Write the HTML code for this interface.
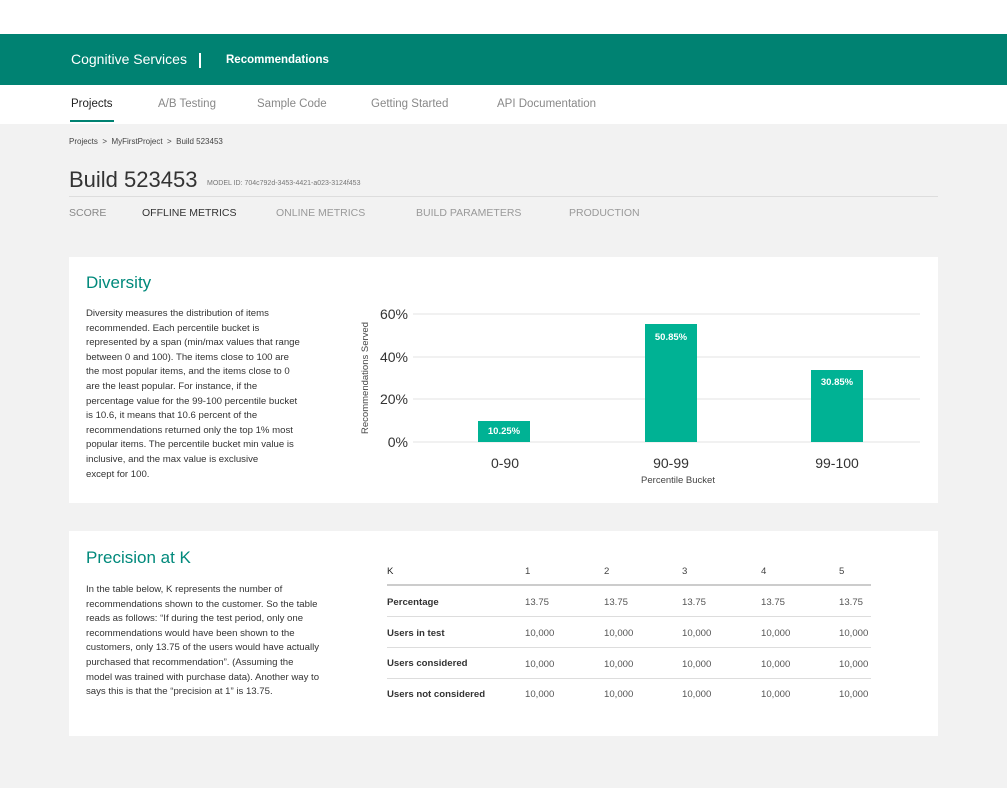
<!DOCTYPE html>
<html><head><meta charset="utf-8"><style>
*{margin:0;padding:0;box-sizing:border-box}
body{width:1007px;height:788px;background:#f2f2f2;font-family:"Liberation Sans",sans-serif;position:relative;overflow:hidden;color:#222}
.a{position:absolute;white-space:nowrap}
</style></head><body>
<div class="a" style="left:0;top:0;width:1007px;height:34px;background:#fff"></div>
<div class="a" style="left:0;top:34px;width:1007px;height:51px;background:#008272"></div>
<div class="a" style="left:71px;top:51px;color:#fff;font-size:14px">Cognitive Services</div>
<div class="a" style="left:199px;top:53px;width:2px;height:15px;background:#fff"></div>
<div class="a" style="left:226px;top:54px;color:#fff;font-size:11.5px;font-weight:bold">Recommendations</div>
<div class="a" style="left:0;top:85px;width:1007px;height:39px;background:#fff"></div>
<div class="a" style="left:71px;top:98px;font-size:11.5px;color:#222">Projects</div>
<div class="a" style="left:70px;top:120px;width:44px;height:2px;background:#008272"></div>
<div class="a" style="left:158px;top:98px;font-size:11.5px;color:#888">A/B Testing</div>
<div class="a" style="left:257px;top:98px;font-size:11.5px;color:#888">Sample Code</div>
<div class="a" style="left:371px;top:98px;font-size:11.5px;color:#888">Getting Started</div>
<div class="a" style="left:497px;top:98px;font-size:11.5px;color:#888">API Documentation</div>
<div class="a" style="left:69px;top:137px;font-size:8px;color:#444">Projects &nbsp;&gt;&nbsp; MyFirstProject &nbsp;&gt;&nbsp; Build 523453</div>
<div class="a" style="left:69px;top:167px;font-size:22px;color:#333;font-weight:300">Build 523453</div>
<div class="a" style="left:207px;top:180px;font-size:7px;color:#777">MODEL ID: 704c792d-3453-4421-a023-3124f453</div>
<div class="a" style="left:69px;top:196px;width:869px;height:1px;background:#ddd"></div>
<div class="a" style="left:69px;top:207px;font-size:10.5px;color:#888">SCORE</div>
<div class="a" style="left:142px;top:207px;font-size:10.5px;color:#333">OFFLINE METRICS</div>
<div class="a" style="left:276px;top:207px;font-size:10.5px;color:#999">ONLINE METRICS</div>
<div class="a" style="left:416px;top:207px;font-size:10.5px;color:#999">BUILD PARAMETERS</div>
<div class="a" style="left:569px;top:207px;font-size:10.5px;color:#999">PRODUCTION</div>

<div class="a" style="left:69px;top:257px;width:869px;height:246px;background:#fff"></div>
<div class="a" style="left:86px;top:273px;font-size:17px;color:#00897b">Diversity</div>
<div class="a" style="left:86px;top:307px;font-size:9.6px;line-height:14.6px;color:#333">Diversity measures the distribution of items<br>recommended. Each percentile bucket is<br>represented by a span (min/max values that range<br>between 0 and 100). The items close to 100 are<br>the most popular items, and the items close to 0<br>are the least popular. For instance, if the<br>percentage value for the 99-100 percentile bucket<br>is 10.6, it means that 10.6 percent of the<br>recommendations returned only the top 1% most<br>popular items. The percentile bucket min value is<br>inclusive, and the max value is exclusive<br>except for 100.</div>
<svg class="a" style="left:350px;top:290px" width="580" height="200" font-family="Liberation Sans, sans-serif">
<g stroke="#e3e3e3" stroke-width="1"><line x1="63" y1="24" x2="570" y2="24"/><line x1="63" y1="67" x2="570" y2="67"/><line x1="63" y1="109" x2="570" y2="109"/><line x1="63" y1="152" x2="570" y2="152"/></g>
<g font-size="14" fill="#333" text-anchor="end"><text x="58" y="29">60%</text><text x="58" y="72">40%</text><text x="58" y="114">20%</text><text x="58" y="157">0%</text></g>
<text transform="translate(18,88) rotate(-90)" font-size="9.5" fill="#444" text-anchor="middle">Recommendations Served</text>
<g fill="#00b294"><rect x="128" y="131" width="52" height="21"/><rect x="295" y="34" width="52" height="118"/><rect x="461" y="80" width="52" height="72"/></g>
<g font-size="9.5" fill="#fff" font-weight="bold" text-anchor="middle"><text x="154" y="144">10.25%</text><text x="321" y="50">50.85%</text><text x="487" y="95">30.85%</text></g>
<g font-size="14" fill="#333" text-anchor="middle"><text x="155" y="178">0-90</text><text x="321" y="178">90-99</text><text x="487" y="178">99-100</text></g>
<text x="328" y="193" font-size="9.5" fill="#444" text-anchor="middle">Percentile Bucket</text>
</svg>

<div class="a" style="left:69px;top:531px;width:869px;height:205px;background:#fff"></div>
<div class="a" style="left:86px;top:548px;font-size:17px;color:#00897b">Precision at K</div>
<div class="a" style="left:86px;top:583px;font-size:9.6px;line-height:14.6px;color:#333">In the table below, K represents the number of<br>recommendations shown to the customer. So the table<br>reads as follows: “If during the test period, only one<br>recommendations would have been shown to the<br>customers, only 13.75 of the users would have actually<br>purchased that recommendation”. (Assuming the<br>model was trained with purchase data). Another way to<br>says this is that the “precision at 1” is 13.75.</div>
<div class="a" style="left:387px;top:584px;width:484px;height:2px;background:#ccc"></div>
<div class="a" style="left:387px;top:616px;width:484px;height:1px;background:#ddd"></div>
<div class="a" style="left:387px;top:647px;width:484px;height:1px;background:#ddd"></div>
<div class="a" style="left:387px;top:678px;width:484px;height:1px;background:#ddd"></div>
<div class="a" style="left:387px;top:566px;font-size:9.6px;line-height:12px">K</div>
<div class="a" style="left:525px;top:566px;font-size:9.6px;color:#444">1</div>
<div class="a" style="left:604px;top:566px;font-size:9.6px;color:#444">2</div>
<div class="a" style="left:682px;top:566px;font-size:9.6px;color:#444">3</div>
<div class="a" style="left:761px;top:566px;font-size:9.6px;color:#444">4</div>
<div class="a" style="left:839px;top:566px;font-size:9.6px;color:#444">5</div>
<div class="a" style="left:387px;top:597px;font-size:9.6px;font-weight:bold;color:#333">Percentage</div>
<div class="a" style="left:525px;top:597px;font-size:9.6px;color:#555">13.75</div>
<div class="a" style="left:604px;top:597px;font-size:9.6px;color:#555">13.75</div>
<div class="a" style="left:682px;top:597px;font-size:9.6px;color:#555">13.75</div>
<div class="a" style="left:761px;top:597px;font-size:9.6px;color:#555">13.75</div>
<div class="a" style="left:839px;top:597px;font-size:9.6px;color:#555">13.75</div>
<div class="a" style="left:387px;top:628px;font-size:9.6px;font-weight:bold;color:#333">Users in test</div>
<div class="a" style="left:387px;top:658px;font-size:9.6px;font-weight:bold;color:#333">Users considered</div>
<div class="a" style="left:387px;top:689px;font-size:9.6px;font-weight:bold;color:#333">Users not considered</div>
<div class="a" style="left:525px;top:628px;font-size:9.6px;color:#555;line-height:30.5px;margin-top:-9px">10,000<br>10,000<br>10,000</div>
<div class="a" style="left:604px;top:628px;font-size:9.6px;color:#555;line-height:30.5px;margin-top:-9px">10,000<br>10,000<br>10,000</div>
<div class="a" style="left:682px;top:628px;font-size:9.6px;color:#555;line-height:30.5px;margin-top:-9px">10,000<br>10,000<br>10,000</div>
<div class="a" style="left:761px;top:628px;font-size:9.6px;color:#555;line-height:30.5px;margin-top:-9px">10,000<br>10,000<br>10,000</div>
<div class="a" style="left:839px;top:628px;font-size:9.6px;color:#555;line-height:30.5px;margin-top:-9px">10,000<br>10,000<br>10,000</div>
</body></html>
